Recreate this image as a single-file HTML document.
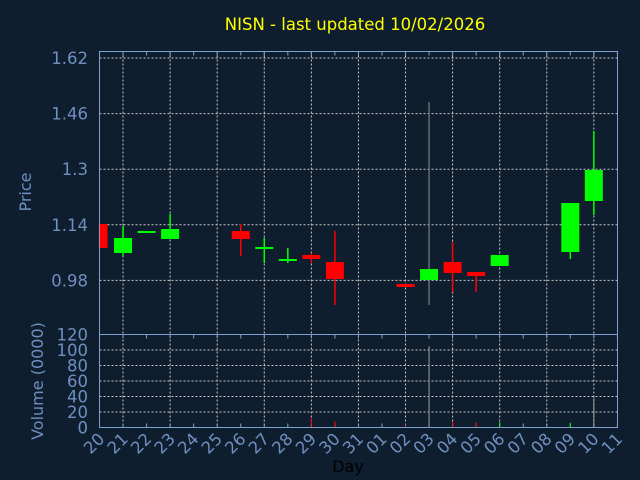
<!DOCTYPE html>
<html><head><meta charset="utf-8"><style>
html,body{margin:0;padding:0;background:#0f1e2f;}
svg{display:block}
text{font-family:"DejaVu Sans","Liberation Sans",sans-serif;}
</style></head><body>
<svg id="s" width="640" height="480" viewBox="0 0 640 480" xmlns="http://www.w3.org/2000/svg">
<rect width="640" height="480" fill="#0f1e2f"/>
<text x="355" y="30" fill="#ffff00" font-size="16.5" text-anchor="middle">NISN - last updated 10/02/2026</text>
<text transform="translate(31,192) rotate(-90)" fill="#6f8fbf" font-size="16" text-anchor="middle">Price</text>
<text transform="translate(43,381) rotate(-90)" fill="#6f8fbf" font-size="16" text-anchor="middle">Volume (0000)</text>
<text x="348" y="472" fill="#000" font-size="16" text-anchor="middle">Day</text>
<g id="g"></g>
</svg>
<script>
var g=document.getElementById('g'),h='';
var L=99.5,R=617.5,T=51.5,M=334.5,B=427.5,st=23.54;
function X(i){return L+st*i;}
function PY(p){return 58+(1.62-p)/0.16*55.6;}
function VY(v){return B-v*0.775;}
[1.62,1.46,1.3,1.14,0.98].forEach(function(p,k){var y=PY(p);
h+='<line x1="'+L+'" x2="'+R+'" y1="'+y+'" y2="'+y+'" stroke="#c8c8c8" stroke-dasharray="2,2"/>';
h+='<text x="88" y="'+(y+6)+'" fill="#6f8fbf" font-size="16.5" text-anchor="end">'+['1.62','1.46','1.3','1.14','0.98'][k]+'</text>';});
[20,40,60,80,100].forEach(function(v){var y=VY(v);
h+='<line x1="'+L+'" x2="'+R+'" y1="'+y+'" y2="'+y+'" stroke="#c8c8c8" stroke-dasharray="2,2"/>';});
[0,20,40,60,80,100,120].forEach(function(v){var y=VY(v);
h+='<text x="88" y="'+(y+6)+'" fill="#6f8fbf" font-size="16.5" text-anchor="end">'+v+'</text>';});
var days=['20','21','22','23','24','25','26','27','28','29','30','31','01','02','03','04','05','06','07','08','09','10','11'];
for(var i=0;i<23;i++){var x=X(i);
if(i%2==1&&i<22){h+='<line x1="'+x+'" x2="'+x+'" y1="'+T+'" y2="'+B+'" stroke="#c8c8c8" stroke-dasharray="2,2"/>';}
h+='<line x1="'+x+'" x2="'+x+'" y1="'+T+'" y2="'+(T+4)+'" stroke="#7f9fcf"/>';
h+='<line x1="'+x+'" x2="'+x+'" y1="'+M+'" y2="'+(M+4)+'" stroke="#7f9fcf"/>';
h+='<line x1="'+x+'" x2="'+x+'" y1="'+B+'" y2="'+(B-4)+'" stroke="#7f9fcf"/>';
h+='<text transform="translate('+(x+6)+',440) rotate(-45)" fill="#6f8fbf" font-size="16.5" text-anchor="end">'+days[i]+'</text>';}
var G='#00ff00',Rd='#ff0000';
var c=[[0,224,248,224,248,Rd],[1,238,253,226,256,G],[2,231,233,231,233,G],[3,229,239,214,239,G],
[6,231,239,224,256,Rd],[7,247,249,238,263,G],[8,259,261,248,263,G],[9,255,259,253,263,Rd],
[10,262,279,231,305,Rd],[13,284,287,284,287,Rd],[14,269,280,102,305,G],[15,262,273,242,292,Rd],
[16,272,276,272,292,Rd],[17,255,266,255,266,G],[20,203,252,203,259,G],[21,170,201,131,215,G]];
c.forEach(function(d){var x=X(d[0]);
var col=d[0]==14?'#909090':d[5];
h+='<line x1="'+x+'" x2="'+x+'" y1="'+d[3]+'" y2="'+d[4]+'" stroke="'+col+'" stroke-width="'+(d[0]==14?1:1.5)+'"/>';
var x0=d[0]==0?L:x-9,wd=d[0]==0?8:18;
h+='<rect x="'+x0+'" y="'+d[1]+'" width="'+wd+'" height="'+Math.max(2,d[2]-d[1])+'" fill="'+d[5]+'"/>';});
var v=[[1,2,G],[7,1,G],[8,2,G],[9,12,Rd],[10,8,Rd],[13,3,Rd],[14,105,'#a0a0a0'],[15,8,Rd],[16,7,Rd],[17,7,G],[20,6,G],[21,38,'#a0a0a0']];
v.forEach(function(d){var x=X(d[0]);h+='<line x1="'+x+'" x2="'+x+'" y1="'+VY(d[1])+'" y2="'+B+'" stroke="'+d[2]+'" stroke-width="1"/>';});
h+='<rect x="'+L+'" y="'+T+'" width="'+(R-L)+'" height="'+(B-T)+'" fill="none" stroke="#7f9fcf"/>';
h+='<line x1="'+L+'" x2="'+R+'" y1="'+M+'" y2="'+M+'" stroke="#7f9fcf"/>';
g.innerHTML=h;
</script>
</body></html>
